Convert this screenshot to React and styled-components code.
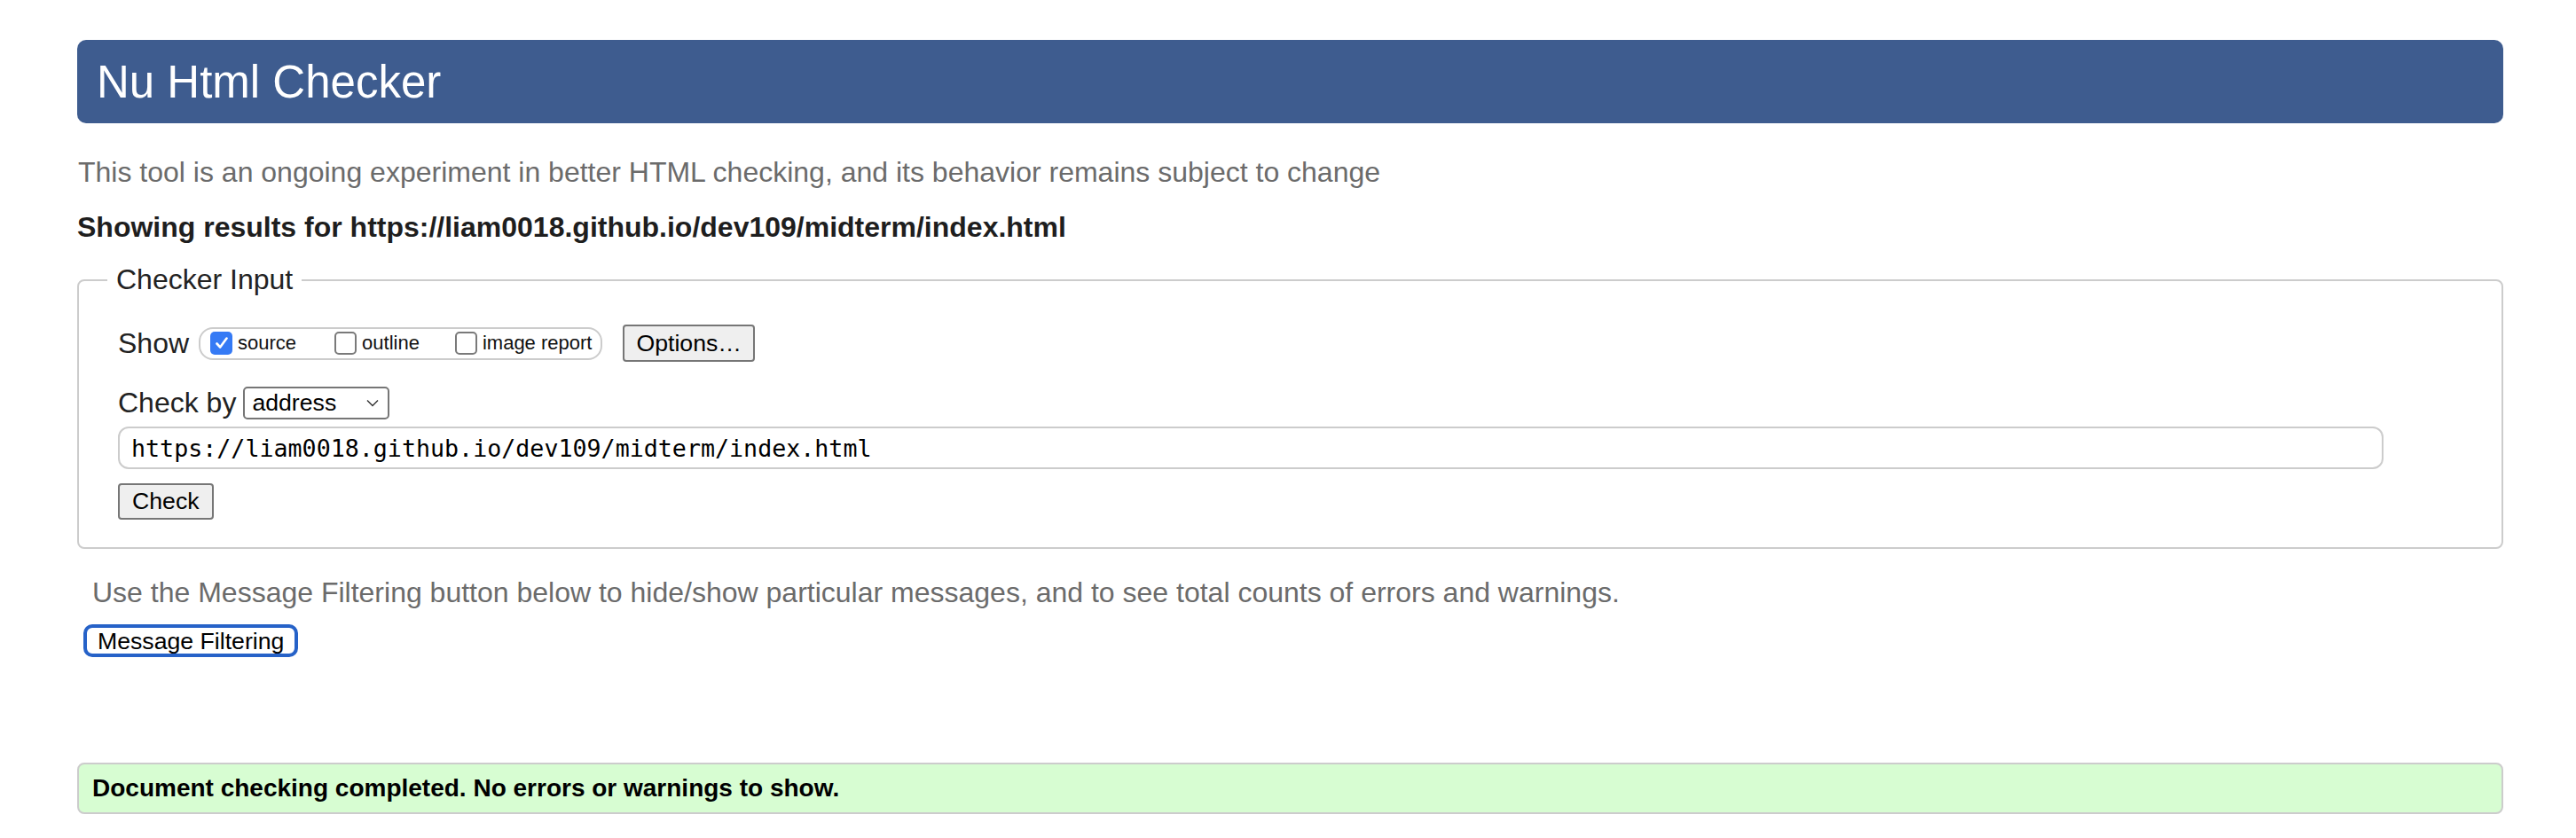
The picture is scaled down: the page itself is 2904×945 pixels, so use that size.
import React from 'react';
import styled, { createGlobalStyle } from 'styled-components';

const GlobalS = createGlobalStyle`
  body {
    margin: 0;
    background: #fff;
    font-family: 'Liberation Sans', Arial, Helvetica, sans-serif;
    color: #222;
  }
`;

const PageS = styled.div`
  padding: 45px 82px 0 87px;
`;

const HeaderS = styled.h1`
  margin: 0;
  height: 94px;
  display: flex;
  align-items: center;
  padding-left: 22px;
  background: #3e5c8f;
  border-radius: 10px;
  color: #fff;
  font-size: 51px;
  font-weight: 400;
`;

const TextS = styled.p`
  margin: ${(props) => props.margin || '0'};
  font-size: 32px;
  line-height: 37px;
  font-weight: ${(props) => (props.bold ? 700 : 400)};
  color: ${(props) => props.color || '#222'};
`;

const FieldsetS = styled.fieldset`
  margin: 22px 0 0;
  padding: 32px 44px 31px 44px;
  border: 2px solid #ccc;
  border-radius: 8px;
  min-width: 0;
`;

const LegendS = styled.legend`
  margin-left: -12px;
  padding: 0 10px;
  font-size: 32px;
  line-height: 37px;
  color: #222;
`;

const RowS = styled.div`
  display: flex;
  align-items: center;
  margin-top: ${(props) => props.margintop || '0'};
`;

const LabelS = styled.span`
  font-size: 32px;
  line-height: 37px;
  color: #222;
  margin-right: ${(props) => props.marginright || '0'};
`;

const GroupS = styled.div`
  display: flex;
  align-items: center;
  box-sizing: border-box;
  height: 37px;
  padding: 0 10px 0 11px;
  margin-right: 23px;
  border: 2px solid #ccc;
  border-radius: 16px;
`;

const OptionS = styled.label`
  display: flex;
  align-items: center;
  margin-left: ${(props) => props.marginleft || '0'};
  font-size: 22px;
  color: #111;
`;

const BoxS = styled.span`
  display: flex;
  align-items: center;
  justify-content: center;
  box-sizing: border-box;
  width: 25px;
  height: 26px;
  margin-right: 6px;
  border-radius: 5px;
  background: ${(props) => (props.checked ? '#357af5' : '#fff')};
  border: ${(props) => (props.checked ? 'none' : '2px solid #7a7a7a')};
`;

const ButtonS = styled.button`
  box-sizing: border-box;
  height: ${(props) => props.height || '41px'};
  padding: 0 ${(props) => props.padx || '14px'};
  margin-left: ${(props) => props.marginleft || '0'};
  font-family: 'Liberation Sans', Arial, sans-serif;
  font-size: 26.67px;
  color: #000;
  background: ${(props) => (props.focus ? '#fff' : '#efefef')};
  border: ${(props) => (props.focus ? '4px solid #2662c8' : '2px solid #767676')};
  border-radius: ${(props) => (props.focus ? '10px' : '4px')};
`;

const SelectS = styled.div`
  display: flex;
  align-items: center;
  justify-content: space-between;
  box-sizing: border-box;
  width: 165px;
  height: 37px;
  padding: 0 10px 0 8px;
  border: 2px solid #767676;
  border-radius: 5px;
  font-size: 26.67px;
  color: #000;
`;

const InputS = styled.input`
  display: block;
  box-sizing: border-box;
  width: 2554px;
  height: 48px;
  margin-top: 8px;
  padding: 0 13px;
  border: 2px solid #ccc;
  border-radius: 12px;
  font-family: 'DejaVu Sans Mono', 'Liberation Mono', monospace;
  font-size: 26.67px;
  color: #000;
  background: #fff;
  outline: none;
`;

const BlockS = styled.div`
  margin-top: ${(props) => props.margintop || '0'};
  margin-left: ${(props) => props.marginleft || '0'};
`;

const SuccessS = styled.div`
  display: flex;
  align-items: center;
  box-sizing: border-box;
  height: 58px;
  margin-top: 119px;
  padding-left: 15px;
  background: #d7fdd2;
  border: 2px solid #ccc;
  border-radius: 8px;
  font-size: 28px;
  font-weight: 700;
  color: #000;
`;

function Check({ checked, label, marginleft }) {
  return <OptionS marginleft={marginleft}>
    <BoxS checked={checked}>
      {checked && (
        <svg width='18' height='18' viewBox='0 0 18 18'>
          <path d='M3.5 9.5 L7.2 13.5 L14.5 3.5' fill='none' stroke='#fff' strokeWidth='2.6' strokeLinecap='round' strokeLinejoin='round' />
        </svg>
      )}
    </BoxS>
    {label}
  </OptionS>;
}

function App() {
  return <PageS>
    <GlobalS />
    <HeaderS>Nu Html Checker</HeaderS>

    <TextS margin='37px 0 0 1px' color='#6b6b6b'>This tool is an ongoing experiment in better HTML checking, and its behavior remains subject to change</TextS>
    <TextS margin='25px 0 0' bold color='#1e1e1e'>Showing results for https://liam0018.github.io/dev109/midterm/index.html</TextS>

    <FieldsetS>
      <LegendS>Checker Input</LegendS>

      <RowS>
        <LabelS marginright='11px'>Show</LabelS>
        <GroupS>
          <Check checked label='source' />
          <Check label='outline' marginleft='43px' />
          <Check label='image report' marginleft='40px' />
        </GroupS>
        <ButtonS height='42px' padx='13px'>Options…</ButtonS>
      </RowS>

      <RowS margintop='28px'>
        <LabelS marginright='8px'>Check by</LabelS>
        <SelectS>
          <span>address</span>
          <svg width='14' height='9' viewBox='0 0 14 9'>
            <path d='M1 1.5 L7 7.5 L13 1.5' fill='none' stroke='#333' strokeWidth='1.4' />
          </svg>
        </SelectS>
      </RowS>

      <InputS readOnly value='https://liam0018.github.io/dev109/midterm/index.html' />

      <BlockS margintop='16px'>
        <ButtonS>Check</ButtonS>
      </BlockS>
    </FieldsetS>

    <TextS margin='31px 0 0 17px' color='#6b6b6b'>Use the Message Filtering button below to hide/show particular messages, and to see total counts of errors and warnings.</TextS>

    <BlockS margintop='17px' marginleft='7px'>
      <ButtonS focus height='37px' padx='12px'>Message Filtering</ButtonS>
    </BlockS>

    <SuccessS>Document checking completed. No errors or warnings to show.</SuccessS>
  </PageS>;
}

export default App;
